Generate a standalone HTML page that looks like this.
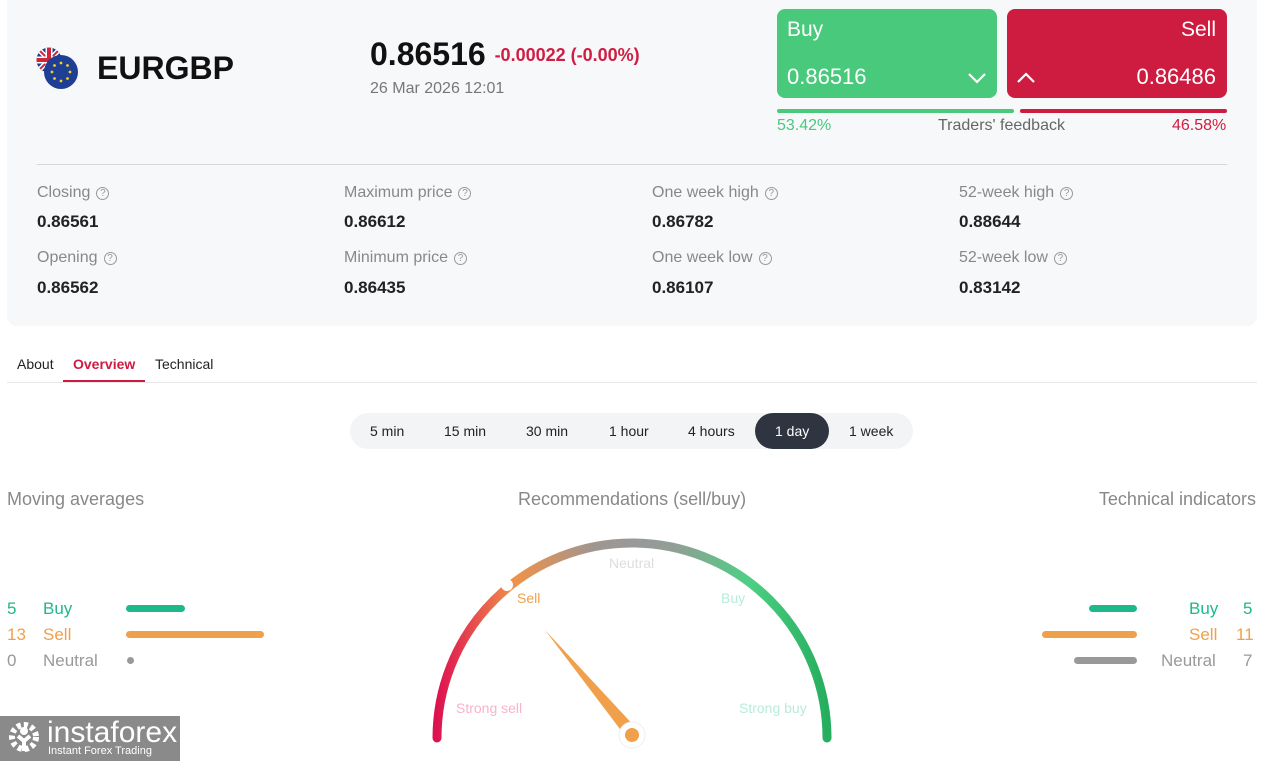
<!DOCTYPE html>
<html><head><meta charset="utf-8"><style>
*{margin:0;padding:0;box-sizing:border-box}
body{width:1270px;height:761px;background:#fff;font-family:"Liberation Sans",Arial,sans-serif;position:relative;overflow:hidden;color:#222}
.abs{position:absolute}
.card{left:7px;top:0;width:1250px;height:326px;background:#f7f8fa;border-radius:0 0 10px 10px}
.lbl{font-size:16px;color:#888}
.val{font-size:17px;font-weight:bold;color:#222}
.q{display:inline-block;width:13px;height:13px;border:1.3px solid #999;border-radius:50%;font-size:10px;text-align:center;line-height:11px;color:#999;margin-left:6px;vertical-align:1px}
.tf{font-size:14px;color:#222;top:423px}
.g{font-size:17px}
</style></head><body>
<div class="abs card"></div>
<svg class="abs" style="left:36px;top:47px" width="44" height="44">
<defs><clipPath id="c1"><circle cx="13" cy="13" r="12.5"/></clipPath></defs>
<g clip-path="url(#c1)"><rect width="26" height="26" fill="#1f3a8f"/><path d="M0 0L26 26M26 0L0 26" stroke="#fff" stroke-width="5"/><path d="M0 0L26 26M26 0L0 26" stroke="#d0243a" stroke-width="2"/><path d="M13 0V26M0 13H26" stroke="#fff" stroke-width="7"/><path d="M13 0V26M0 13H26" stroke="#d0243a" stroke-width="4"/></g>
<circle cx="25" cy="25" r="17" fill="#1f3f94"/>
<g fill="#f2d024"><circle cx="25" cy="16" r="1.4"/><circle cx="31.5" cy="18.5" r="1.4"/><circle cx="34" cy="25" r="1.4"/><circle cx="31.5" cy="31.5" r="1.4"/><circle cx="25" cy="34" r="1.4"/><circle cx="18.5" cy="31.5" r="1.4"/><circle cx="16" cy="25" r="1.4"/><circle cx="18.5" cy="18.5" r="1.4"/></g>
</svg>
<div class="abs" style="left:97px;top:50px;font-size:32px;font-weight:bold;color:#111">EURGBP</div>
<div class="abs" style="left:370px;top:36px;font-size:32px;font-weight:bold;color:#111">0.86516 <span style="font-size:18px;color:#d01e43;vertical-align:4px">-0.00022 (-0.00%)</span></div>
<div class="abs" style="left:370px;top:80px;font-size:16px;color:#777">26 Mar 2026 12:01</div>
<div class="abs" style="left:777px;top:9px;width:220px;height:89px;background:#48c97c;border-radius:8px;color:#fff">
<div class="abs" style="left:10px;top:9px;font-size:21px">Buy</div>
<div class="abs" style="left:10px;top:55px;font-size:22px">0.86516</div>
<svg class="abs" style="left:190px;top:62px" width="20" height="14"><path d="M2 3L10 11L18 3" stroke="#fff" stroke-width="2.2" fill="none"/></svg></div>
<div class="abs" style="left:1007px;top:9px;width:220px;height:89px;background:#ce1c41;border-radius:8px;color:#fff">
<div class="abs" style="right:11px;top:9px;font-size:21px">Sell</div>
<div class="abs" style="right:11px;top:55px;font-size:22px">0.86486</div>
<svg class="abs" style="left:9px;top:62px" width="20" height="14"><path d="M2 11L10 3L18 11" stroke="#fff" stroke-width="2.2" fill="none"/></svg></div>
<div class="abs" style="left:777px;top:109px;width:237px;height:4px;background:#48c97c;border-radius:2px"></div>
<div class="abs" style="left:1020px;top:109px;width:207px;height:4px;background:#ce1c41;border-radius:2px"></div>
<div class="abs" style="left:777px;top:117px;font-size:16px;color:#48c97c">53.42%</div>
<div class="abs" style="left:938px;top:117px;font-size:16px;color:#666">Traders' feedback</div>
<div class="abs" style="left:1172px;top:117px;font-size:16px;color:#ce1c41">46.58%</div>
<div class="abs" style="left:37px;top:164px;width:1190px;height:1px;background:#d8d8d8"></div>
<div class="abs lbl" style="left:37px;top:184px">Closing<span class="q">?</span></div><div class="abs val" style="left:37px;top:212px">0.86561</div>
<div class="abs lbl" style="left:344px;top:184px">Maximum price<span class="q">?</span></div><div class="abs val" style="left:344px;top:212px">0.86612</div>
<div class="abs lbl" style="left:652px;top:184px">One week high<span class="q">?</span></div><div class="abs val" style="left:652px;top:212px">0.86782</div>
<div class="abs lbl" style="left:959px;top:184px">52-week high<span class="q">?</span></div><div class="abs val" style="left:959px;top:212px">0.88644</div>
<div class="abs lbl" style="left:37px;top:249px">Opening<span class="q">?</span></div><div class="abs val" style="left:37px;top:278px">0.86562</div>
<div class="abs lbl" style="left:344px;top:249px">Minimum price<span class="q">?</span></div><div class="abs val" style="left:344px;top:278px">0.86435</div>
<div class="abs lbl" style="left:652px;top:249px">One week low<span class="q">?</span></div><div class="abs val" style="left:652px;top:278px">0.86107</div>
<div class="abs lbl" style="left:959px;top:249px">52-week low<span class="q">?</span></div><div class="abs val" style="left:959px;top:278px">0.83142</div>
<div class="abs" style="left:17px;top:356px;font-size:14px">About</div>
<div class="abs" style="left:73px;top:356px;font-size:14px;color:#ce1c41;font-weight:bold">Overview</div>
<div class="abs" style="left:155px;top:356px;font-size:14px">Technical</div>
<div class="abs" style="left:7px;top:382px;width:1250px;height:1px;background:#e8e8e8"></div>
<div class="abs" style="left:63px;top:380px;width:82px;height:2px;background:#ce1c41"></div>
<div class="abs" style="left:350px;top:413px;width:563px;height:36px;background:#f3f4f6;border-radius:18px"></div>
<div class="abs" style="left:755px;top:413px;width:74px;height:36px;background:#2e3440;border-radius:18px"></div>
<div class="abs tf" style="left:370px">5 min</div><div class="abs tf" style="left:444px">15 min</div><div class="abs tf" style="left:526px">30 min</div><div class="abs tf" style="left:609px">1 hour</div><div class="abs tf" style="left:688px">4 hours</div><div class="abs tf" style="left:775px;color:#fff">1 day</div><div class="abs tf" style="left:849px">1 week</div>
<div class="abs" style="left:7px;top:489px;font-size:18px;color:#888">Moving averages</div>
<div class="abs" style="left:518px;top:489px;font-size:18px;color:#888">Recommendations (sell/buy)</div>
<div class="abs" style="right:14px;top:489px;font-size:18px;color:#888">Technical indicators</div>
<div class="abs g" style="left:7px;top:599px;color:#1db98a">5</div><div class="abs g" style="left:43px;top:599px;color:#1db98a">Buy</div><div class="abs" style="left:126px;top:605px;width:59px;height:7px;border-radius:4px;background:#1db98a"></div>
<div class="abs g" style="left:7px;top:625px;color:#f0a04b">13</div><div class="abs g" style="left:43px;top:625px;color:#f0a04b">Sell</div><div class="abs" style="left:126px;top:631px;width:138px;height:7px;border-radius:4px;background:#f0a04b"></div>
<div class="abs g" style="left:7px;top:651px;color:#999">0</div><div class="abs g" style="left:43px;top:651px;color:#999">Neutral</div><div class="abs" style="left:127px;top:657px;width:7px;height:7px;border-radius:4px;background:#999"></div>
<div class="abs" style="left:1089px;top:605px;width:48px;height:7px;border-radius:4px;background:#1db98a"></div><div class="abs g" style="left:1189px;top:599px;color:#1db98a">Buy</div><div class="abs g" style="left:1243px;top:599px;color:#1db98a">5</div>
<div class="abs" style="left:1042px;top:631px;width:95px;height:7px;border-radius:4px;background:#f0a04b"></div><div class="abs g" style="left:1189px;top:625px;color:#f0a04b">Sell</div><div class="abs g" style="left:1236px;top:625px;color:#f0a04b">11</div>
<div class="abs" style="left:1074px;top:657px;width:63px;height:7px;border-radius:4px;background:#999"></div><div class="abs g" style="left:1161px;top:651px;color:#999">Neutral</div><div class="abs g" style="left:1243px;top:651px;color:#999">7</div>
<svg class="abs" style="left:0;top:0" width="1270" height="761">
<defs><linearGradient id="gg" x1="437" x2="827" y1="0" y2="0" gradientUnits="userSpaceOnUse">
<stop offset="0" stop-color="#dd1150"/><stop offset="0.2" stop-color="#f0924a"/><stop offset="0.4" stop-color="#a0968e"/><stop offset="0.5" stop-color="#999"/><stop offset="0.62" stop-color="#8fa095"/><stop offset="0.8" stop-color="#4ecf84"/><stop offset="1" stop-color="#25ae5e"/></linearGradient></defs>
<path d="M437 738A195 195 0 0 1 827 738" fill="none" stroke="url(#gg)" stroke-width="9" stroke-linecap="round"/>
<circle cx="507" cy="585" r="6" fill="#fff"/>
<text x="609" y="568" font-size="14" fill="#ddd" font-family="Liberation Sans">Neutral</text>
<text x="517" y="603" font-size="14" fill="#f0a04b" font-family="Liberation Sans">Sell</text>
<text x="721" y="603" font-size="14" fill="#b8ecd8" font-family="Liberation Sans">Buy</text>
<text x="456" y="713" font-size="14" fill="#f8b4c8" font-family="Liberation Sans">Strong sell</text>
<text x="739" y="713" font-size="14" fill="#b8ecd8" font-family="Liberation Sans">Strong buy</text>
<path d="M545 630L637 729L626 737Z" fill="#f0a04b"/>
<circle cx="632" cy="735" r="13" fill="#fff" stroke="#eee" stroke-width="1"/>
<circle cx="632" cy="735" r="7" fill="#f0a04b"/>
</svg>
<div class="abs" style="left:0;top:716px;width:180px;height:45px;background:#8a8a8a"></div>
<svg class="abs" style="left:6px;top:719px" width="36" height="36"><circle cx="18" cy="18" r="12" fill="none" stroke="#fff" stroke-width="6" stroke-dasharray="4 3"/><circle cx="18" cy="12" r="4" fill="#fff"/><path d="M12 17L18 22L24 17M18 22V32" stroke="#fff" stroke-width="4" fill="none"/></svg>
<div class="abs" style="left:47px;top:716px;font-size:30px;color:#fff">instaforex</div>
<div class="abs" style="left:48px;top:745px;font-size:11px;color:#fff">Instant Forex Trading</div>
</body></html>
